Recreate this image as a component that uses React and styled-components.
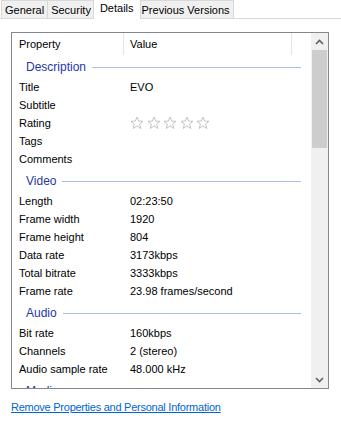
import React from "react";
import styled, { createGlobalStyle } from "styled-components";

const GlobalStyle = createGlobalStyle`
  html, body {
    margin: 0;
    padding: 0;
    background: #ffffff;
  }
`;

const tabs = [
  { label: "General" },
  { label: "Security" },
  { label: "Details", active: true },
  { label: "Previous Versions" },
];

const groups = [
  {
    title: "Description",
    rows: [
      { name: "Title", value: "EVO" },
      { name: "Subtitle", value: "" },
      { name: "Rating", stars: true },
      { name: "Tags", value: "" },
      { name: "Comments", value: "" },
    ],
  },
  {
    title: "Video",
    rows: [
      { name: "Length", value: "02:23:50" },
      { name: "Frame width", value: "1920" },
      { name: "Frame height", value: "804" },
      { name: "Data rate", value: "3173kbps" },
      { name: "Total bitrate", value: "3333kbps" },
      { name: "Frame rate", value: "23.98 frames/second" },
    ],
  },
  {
    title: "Audio",
    rows: [
      { name: "Bit rate", value: "160kbps" },
      { name: "Channels", value: "2 (stereo)" },
      { name: "Audio sample rate", value: "48.000 kHz" },
    ],
  },
  { title: "Media", rows: [] },
];

function Star() {
  return (
    <svg width="14" height="14" viewBox="0 0 14 14">
      <polygon
        points="7,1 8.7,5.1 13,5.3 9.6,8.1 10.8,12.5 7,10 3.2,12.5 4.4,8.1 1,5.3 5.3,5.1"
        fill="#ffffff"
        stroke="#c4c4c4"
        strokeWidth="1"
        strokeLinejoin="round"
      />
    </svg>
  );
}

function Chevron({ down }) {
  return (
    <svg width="9" height="6" viewBox="0 0 9 6">
      <polyline
        points={down ? "1,1 4.5,4.5 8,1" : "1,5 4.5,1.5 8,5"}
        fill="none"
        stroke="#606060"
        strokeWidth="1.6"
      />
    </svg>
  );
}

export default function App() {
  return (
    <Window>
      <GlobalStyle />
      <TabStrip>
        {tabs.map((t) => (
          <Tab key={t.label} active={t.active}>
            {t.label}
          </Tab>
        ))}
      </TabStrip>
      <Page>
        <ListBox>
          <ListContent>
            <Header>
              <HeaderCell>Property</HeaderCell>
              <HeaderCell>Value</HeaderCell>
              <HeaderCell />
            </Header>
            {groups.map((g) => (
              <React.Fragment key={g.title}>
                <GroupRow>
                  <GroupTitle>{g.title}</GroupTitle>
                  <GroupLine />
                </GroupRow>
                {g.rows.map((r) => (
                  <Row key={r.name}>
                    <Cell>{r.name}</Cell>
                    <ValueCell>
                      {r.stars ? (
                        <Stars>
                          {[0, 1, 2, 3, 4].map((i) => (
                            <Star key={i} />
                          ))}
                        </Stars>
                      ) : (
                        r.value
                      )}
                    </ValueCell>
                  </Row>
                ))}
              </React.Fragment>
            ))}
          </ListContent>
          <ScrollBar>
            <ScrollButton>
              <Chevron />
            </ScrollButton>
            <Thumb />
            <Track />
            <ScrollButton>
              <Chevron down />
            </ScrollButton>
          </ScrollBar>
        </ListBox>
        <Link href="#">Remove Properties and Personal Information</Link>
      </Page>
    </Window>
  );
}

const Window = styled.div`
  width: 341px;
  height: 425px;
  background: #ffffff;
  font-family: "Liberation Sans", Arial, sans-serif;
  font-size: 11px;
  color: #000000;
  overflow: hidden;
`;

const TabStrip = styled.div`
  display: flex;
  align-items: flex-end;
  height: 18px;
  padding-left: 1px;
  border-bottom: 1px solid #d9d9d9;
`;

const Tab = styled.div`
  box-sizing: border-box;
  height: ${(p) => (p.active ? "20px" : "18px")};
  margin: ${(p) => (p.active ? "0 -2px -1px -2px" : "0 0 0 -1px")};
  padding: ${(p) => (p.active ? "1px 6px 0 6px" : "2px 3px 0 3px")};
  background: ${(p) => (p.active ? "#ffffff" : "#f0f0f0")};
  border: 1px solid #d9d9d9;
  border-bottom: none;
  font-size: 11px;
  line-height: 14px;
  white-space: nowrap;
  position: relative;
  z-index: ${(p) => (p.active ? 1 : 0)};

  &:first-child {
    margin-left: 0;
  }
`;

const Page = styled.div`
  padding: 13px 0 0 11px;
`;

const ListBox = styled.div`
  box-sizing: border-box;
  width: 318px;
  height: 357px;
  border: 1px solid #828790;
  display: grid;
  grid-template-columns: 1fr 17px;
  overflow: hidden;
`;

const ListContent = styled.div`
  overflow: hidden;
`;

const Header = styled.div`
  display: grid;
  grid-template-columns: 112px 168px 1fr;
  height: 21px;
`;

const HeaderCell = styled.div`
  padding-left: 6px;
  line-height: 22px;
  border-right: 1px solid #e5e5e5;

  &:first-child {
    padding-left: 7px;
  }
  &:last-child {
    border-right: none;
  }
`;

const GroupRow = styled.div`
  display: flex;
  align-items: center;
  height: 24px;
  padding: 2px 0 0 14px;
  box-sizing: border-box;
`;

const GroupTitle = styled.span`
  color: #1f37a6;
  font-size: 12px;
  line-height: 16px;
`;

const GroupLine = styled.div`
  width: 0;
  flex: 1;
  height: 1px;
  margin: 0 10px 0 6px;
  background: #a8bfe6;
`;

const Row = styled.div`
  display: grid;
  grid-template-columns: 112px 1fr;
  height: 18px;
  line-height: 18px;
`;

const Cell = styled.div`
  padding-left: 7px;
  white-space: nowrap;
`;

const ValueCell = styled.div`
  padding-left: 6px;
  white-space: nowrap;
  display: flex;
  align-items: center;
`;

const Stars = styled.div`
  display: flex;
  gap: 2.5px;
`;

const ScrollBar = styled.div`
  display: flex;
  flex-direction: column;
  background: #f0f0f0;
`;

const ScrollButton = styled.div`
  height: 17px;
  display: flex;
  align-items: center;
  justify-content: center;
  flex: none;
`;

const Thumb = styled.div`
  height: 98px;
  margin: 0 1px;
  background: #cdcdcd;
  flex: none;
`;

const Track = styled.div`
  flex: 1;
`;

const Link = styled.a`
  display: inline-block;
  margin-top: 11px;
  color: #0066cc;
  font-size: 11px;
  letter-spacing: -0.25px;
  text-decoration: underline;
  line-height: 15px;
`;
